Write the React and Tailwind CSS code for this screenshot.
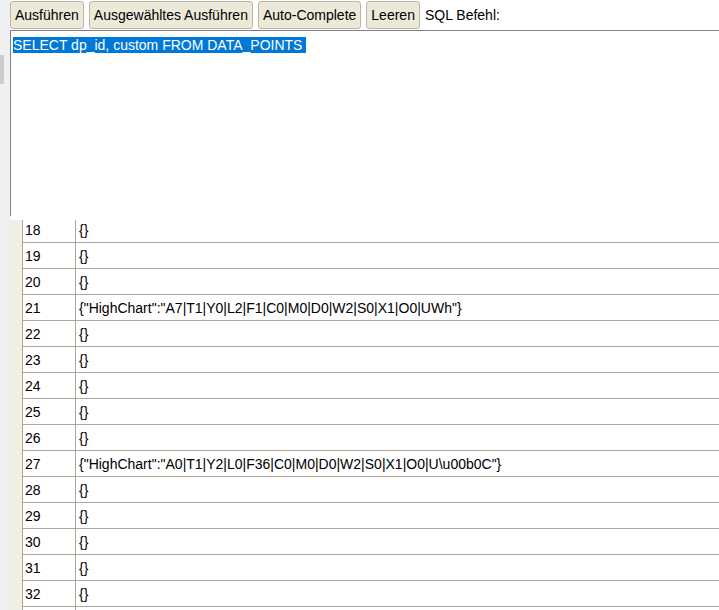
import React from "react";

const rows = [
  ["18", "{}"],
  ["19", "{}"],
  ["20", "{}"],
  ["21", '{"HighChart":"A7|T1|Y0|L2|F1|C0|M0|D0|W2|S0|X1|O0|UWh"}'],
  ["22", "{}"],
  ["23", "{}"],
  ["24", "{}"],
  ["25", "{}"],
  ["26", "{}"],
  ["27", '{"HighChart":"A0|T1|Y2|L0|F36|C0|M0|D0|W2|S0|X1|O0|U\\u00b0C"}'],
  ["28", "{}"],
  ["29", "{}"],
  ["30", "{}"],
  ["31", "{}"],
  ["32", "{}"],
  ["", ""],
];

function Btn({ children }) {
  return (
    <button className="h-[28px] px-[4px] bg-[#ece9d8] border border-[#b9b6a6] rounded-[3px] text-[14px] text-black leading-none">
      {children}
    </button>
  );
}

export default function App() {
  return (
    <div className="flex w-[719px] h-[610px] overflow-hidden bg-white font-['Liberation_Sans',Arial,sans-serif] text-[14px] text-black">
      <div className="w-[10px] shrink-0 bg-[#f0f0f0] flex flex-col">
        <div className="h-[55px]" />
        <div className="h-[29px] w-[4px] bg-[#cdcdcd]" />
      </div>
      <div className="flex-1 min-w-0 flex flex-col">
        <div className="h-[30px] flex items-center gap-[5px]">
          <Btn>Ausführen</Btn>
          <Btn>Ausgewähltes Ausführen</Btn>
          <Btn>Auto-Complete</Btn>
          <Btn>Leeren</Btn>
          <span>SQL Befehl:</span>
        </div>
        <div className="h-[186px] w-[740px] border-t border-l border-[#828282] pl-[2px] pt-[6px] leading-[16px] whitespace-pre">
          <span className="bg-[#0078d7] text-white">SELECT dp_id, custom FROM DATA_POINTS </span>
        </div>
        <div className="h-[4px]" />
        <div className="flex-1 overflow-hidden">
          <div className="-mt-[3px] flex">
            <div className="w-[12px] shrink-0 bg-[#f1efe2]" />
            <div className="flex-1 flex flex-col">
              {rows.map(([n, v], i) => (
                <div key={i} className="flex h-[26px] border-b border-[#aca899]">
                  <div className="w-[54px] shrink-0 border-l border-r border-[#aca899] pl-[2px] pt-[1px] flex items-center">
                    {n}
                  </div>
                  <div className="flex-1 pl-[3px] pt-[1px] flex items-center whitespace-nowrap">{v}</div>
                </div>
              ))}
            </div>
          </div>
        </div>
      </div>
    </div>
  );
}
